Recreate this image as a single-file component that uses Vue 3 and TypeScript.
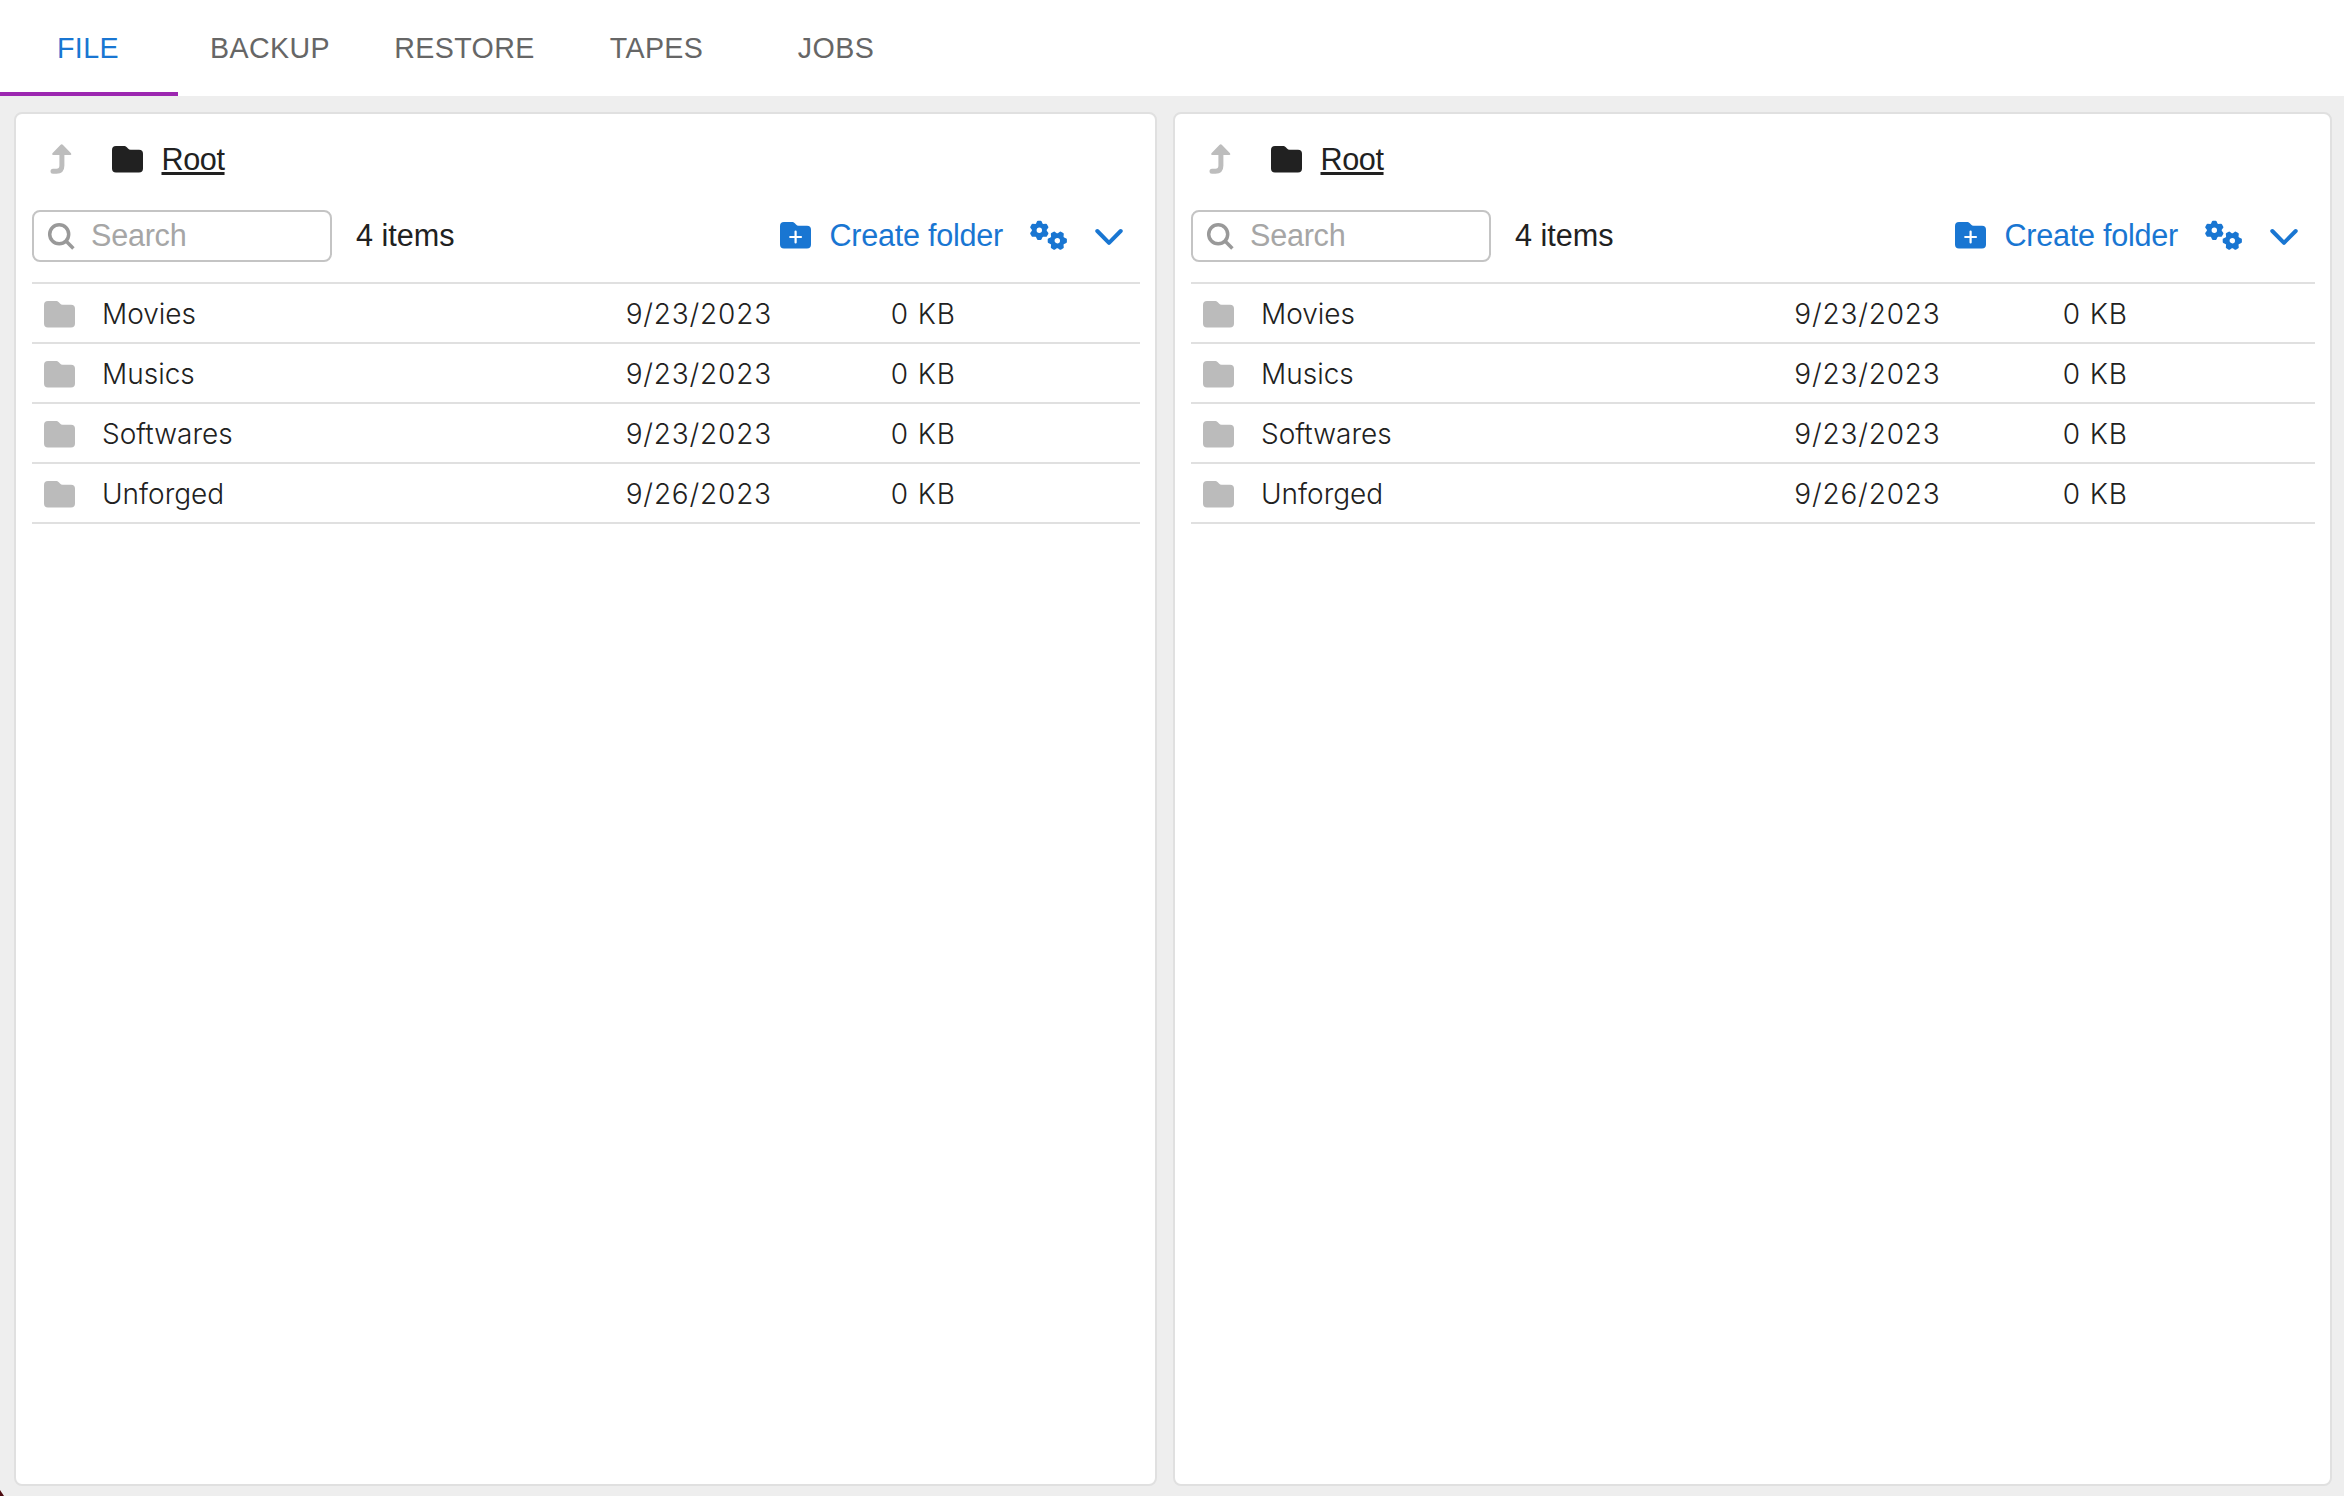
<script setup lang="ts">
interface Entry {
  name: string
  date: string
  size: string
}

const tabs: string[] = ['FILE', 'BACKUP', 'RESTORE', 'TAPES', 'JOBS']
const activeTab = 'FILE'

const entries: Entry[] = [
  { name: 'Movies', date: '9/23/2023', size: '0 KB' },
  { name: 'Musics', date: '9/23/2023', size: '0 KB' },
  { name: 'Softwares', date: '9/23/2023', size: '0 KB' },
  { name: 'Unforged', date: '9/26/2023', size: '0 KB' },
]

const panes: string[] = ['left', 'right']

const folderPath =
  'M4 0H11.6C13 0 14 .4 14.8 1.3L16 2.6C16.7 3.4 17.5 3.8 18.6 3.8H27A4 4 0 0 1 31 7.8V22.5A4 4 0 0 1 27 26.5H4A4 4 0 0 1 0 22.5V4A4 4 0 0 1 4 0Z'

// Outline of a six-toothed gear followed by its round hole.
function gear(cx: number, cy: number, turn: number): string {
  const pts: string[] = []
  for (let i = 0; i < 6; i++) {
    const mid = turn + i * 60
    const corners: [number, number][] = [[-23, 6.5], [-9, 8.7], [9, 8.7], [23, 6.5]]
    for (const [offset, r] of corners) {
      const a = ((mid + offset) * Math.PI) / 180
      pts.push(`${(cx + r * Math.cos(a)).toFixed(2)} ${(cy + r * Math.sin(a)).toFixed(2)}`)
    }
  }
  return `M${pts.join('L')}ZM${cx - 3.7} ${cy}a3.7 3.7 0 1 0 7.4 0a3.7 3.7 0 1 0 -7.4 0Z`
}

const gears = gear(10.3, 10.3, -90) + gear(28.3, 20.7, 0)
</script>

<template>
  <div class="app">
    <nav class="tabs">
      <button
        v-for="tab in tabs"
        :key="tab"
        class="tab"
        :class="[tab.toLowerCase(), { active: tab === activeTab }]"
      >{{ tab }}</button>
    </nav>
    <main class="panes">
      <section v-for="pane in panes" :key="pane" class="pane" :class="pane">
        <div class="crumbs">
          <svg class="up" width="22" height="30" viewBox="0 0 22 30">
            <path d="M11.7 .3Q12.4 .3 13 1L21 9.2Q22 11 20.4 11H3.2Q1.4 11 2.4 9.2L10.4 1Q11 .3 11.7 .3Z" />
            <path class="stem" d="M11.9 9V21.5Q11.9 27.2 6.5 27.2H3" />
          </svg>
          <svg class="folder" width="31" height="27" viewBox="0 0 31 27"><path :d="folderPath" /></svg>
          <a class="root">Root</a>
        </div>
        <div class="toolbar">
          <label class="search">
            <svg width="28" height="28" viewBox="0 0 28 28">
              <circle cx="12.2" cy="12.2" r="9.5" />
              <path d="M19 19L26.4 26.4" />
            </svg>
            <span>Search</span>
          </label>
          <span class="count">4 items</span>
          <button class="create">
            <svg width="31" height="27" viewBox="0 0 31 27">
              <path :d="folderPath" />
              <path class="plus" d="M15.6 9.6V20.4M10.2 15H21" />
            </svg>
            <span>Create folder</span>
          </button>
          <svg class="gears" width="39" height="31" viewBox="0 0 39 31"><path :d="gears" /></svg>
          <svg class="chevron" width="28" height="18" viewBox="0 0 28 18"><path d="M2.3 3L14 14.8L25.7 3" /></svg>
        </div>
        <ul class="list">
          <li v-for="entry in entries" :key="entry.name" class="row">
            <div class="name">
              <svg width="31" height="27" viewBox="0 0 31 27"><path :d="folderPath" /></svg>
              <span>{{ entry.name }}</span>
            </div>
            <span class="date">{{ entry.date }}</span>
            <span class="size">{{ entry.size }}</span>
          </li>
        </ul>
      </section>
    </main>
    <i class="corner"></i>
  </div>
</template>

<style>
html,
body {
  margin: 0;
  background: #eee;
}
</style>

<style scoped>
.app {
  position: relative;
  display: flex;
  flex-direction: column;
  box-sizing: border-box;
  width: 100%;
  height: 100vh;
  overflow: hidden;
  background: #eee;
  color: #212121;
  font: 30.6px/36px "Liberation Sans", Arial, sans-serif;
  letter-spacing: -0.25px;
}
svg {
  display: block;
  flex: none;
  fill: currentColor;
}
button {
  border: 0;
  padding: 0;
  background: none;
  color: inherit;
  font: inherit;
  letter-spacing: inherit;
}
.tabs {
  display: flex;
  flex: none;
  height: 96px;
  background: #fff;
}
.tab {
  box-sizing: border-box;
  width: 178px;
  border-bottom: 4px solid transparent;
  padding-top: 3px;
  color: #666;
  font-size: 28.6px;
  letter-spacing: 0.4px;
  text-align: center;
}
.tab.file {
  padding-right: 2px;
}
.tab.backup {
  width: 184px;
}
.tab.restore {
  width: 205px;
}
.tab.tapes {
  width: 179px;
}
.tab.jobs {
  width: 180px;
}
.tab.active {
  border-bottom-color: #9c27b0;
  color: #1976d2;
}
.panes {
  display: flex;
  flex: 1;
  gap: 16px;
  padding: 16px 12px 10px 14px;
}
.pane {
  box-sizing: border-box;
  border: 2px solid #e0e0e0;
  border-radius: 8px;
  padding: 16px 15px 0 16px;
  background: #fff;
}
.pane.left {
  width: 1143px;
}
.pane.right {
  width: 1159px;
}
.crumbs {
  display: flex;
  align-items: center;
  height: 58px;
  padding-left: 18px;
}
.up {
  color: #bdbdbd;
}
.stem {
  fill: none;
  stroke: currentColor;
  stroke-width: 5;
  stroke-linecap: round;
}
.folder {
  margin-left: 39.5px;
}
.root {
  margin-left: 19px;
  letter-spacing: -0.4px;
  text-decoration: underline;
  text-decoration-thickness: 3px;
  text-underline-offset: 2px;
  text-decoration-skip-ink: none;
}
.toolbar {
  display: flex;
  align-items: center;
  height: 52px;
  margin-top: 22px;
}
.toolbar span {
  margin-bottom: 2px;
}
.search {
  display: flex;
  align-items: center;
  box-sizing: border-box;
  width: 300px;
  height: 52px;
  border: 2px solid #c4c4c4;
  border-radius: 8px;
  padding-left: 13px;
  color: #a6a6a6;
}
.search svg {
  fill: none;
  stroke: #999;
  stroke-width: 3.5;
}
.search span {
  margin-left: 16px;
}
.count {
  margin-left: 24px;
  letter-spacing: 0;
}
.create {
  display: flex;
  align-items: center;
  margin-left: auto;
  color: #1976d2;
}
.create span {
  margin-left: 18.5px;
}
.create svg {
  margin-top: -2px;
}
.plus {
  stroke: #fff;
  stroke-width: 2.2;
  stroke-linecap: round;
}
.gears {
  margin: -1px 0 0 26px;
  color: #1976d2;
  fill-rule: evenodd;
  stroke: currentColor;
  stroke-width: 2;
  stroke-linejoin: round;
}
.chevron {
  margin: 2px 17px 0 27px;
  fill: none;
  stroke: #1976d2;
  stroke-width: 4;
  stroke-linecap: round;
  stroke-linejoin: round;
}
.list {
  margin: 20px 0 0;
  border-top: 2px solid #e0e0e0;
  padding: 0;
  list-style: none;
}
.row {
  display: grid;
  grid-template-columns: 50% 20% 20% 10%;
  align-items: center;
  box-sizing: border-box;
  height: 60px;
  border-bottom: 2px solid #e0e0e0;
  padding-top: 2px;
  font-family: Inter, "Liberation Sans", sans-serif;
  font-size: 28px;
  font-weight: 350;
  letter-spacing: 0;
  text-align: center;
}
.name {
  display: flex;
  align-items: center;
  padding-left: 12px;
}
.name svg {
  color: #bbb;
}
.name span {
  margin-left: 27px;
}
.date {
  padding-left: 4px;
  letter-spacing: 0.8px;
}
.size {
  padding-left: 10px;
  letter-spacing: 0.9px;
}
.corner {
  position: absolute;
  bottom: 0;
  left: 0;
  width: 4px;
  height: 6px;
  background: #4d0b10;
  clip-path: polygon(0 0, 0 100%, 100% 100%);
}
</style>
